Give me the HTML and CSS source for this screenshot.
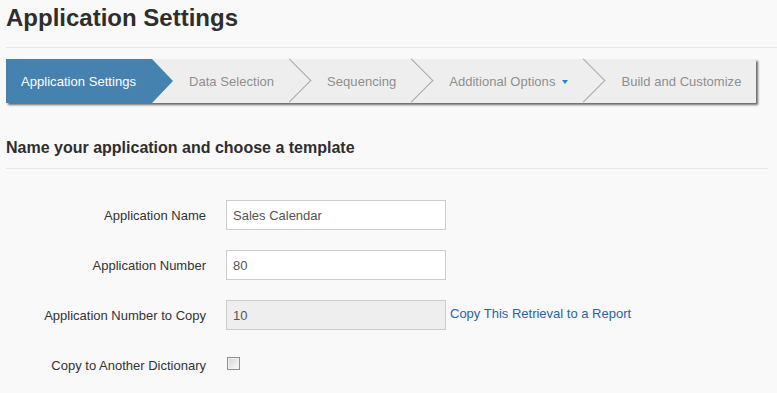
FILE: index.html
```html
<!DOCTYPE html>
<html lang="en">
<head>
  <meta charset="UTF-8">
  <title>Application Settings</title>
  <link rel="stylesheet" href="styles.css">
</head>
<body>
  <main class="page">
    <h1 class="page-title">Application Settings</h1>

    <ol class="wizard">
      <li class="step active">Application Settings</li>
      <li class="step">Data Selection</li>
      <li class="step">Sequencing</li>
      <li class="step">Additional Options<span class="caret"></span></li>
      <li class="step">Build and Customize</li>
    </ol>

    <h2 class="section-title">Name your application and choose a template</h2>

    <form class="form">
      <div class="row">
        <label class="label" for="app-name">Application Name</label>
        <input class="field" id="app-name" type="text" value="Sales Calendar">
      </div>
      <div class="row">
        <label class="label" for="app-number">Application Number</label>
        <input class="field" id="app-number" type="text" value="80">
      </div>
      <div class="row">
        <label class="label" for="app-copy">Application Number to Copy</label>
        <input class="field" id="app-copy" type="text" value="10" disabled>
        <a class="link" href="#">Copy This Retrieval to a Report</a>
      </div>
      <div class="row">
        <label class="label" for="app-dict">Copy to Another Dictionary</label>
        <input class="check" id="app-dict" type="checkbox">
      </div>
    </form>
  </main>
</body>
</html>
```

FILE: styles.css
```css
*, *::before, *::after {
  box-sizing: border-box;
}

body {
  margin: 0;
  background: #f9f9f9;
  color: #333;
  font-family: "Liberation Sans", Arial, sans-serif;
}

.page {
  padding: 3px 0 0 6px;
}

.page-title {
  margin: 0;
  font-size: 24px;
  line-height: 30px;
  font-weight: bold;
  color: #2e2e2e;
  padding-bottom: 14px;
  border-bottom: 1px solid #e6e6e6;
}

.wizard {
  display: flex;
  list-style: none;
  margin: 11px 21px 0 0;
  padding: 0;
  height: 44px;
  background: #eee;
  box-shadow: 2px 2px 2px #6a6a6a;
}

.step {
  position: relative;
  padding: 0 16px;
  margin-right: 21px;
  line-height: 45px;
  font-size: 13px;
  letter-spacing: 0.04px;
  color: #8e8e8e;
  white-space: nowrap;

  /* grey chevron between steps */
  &::after {
    content: '';
    position: absolute;
    top: 6.44px;
    right: -14.56px;
    width: 31.11px;
    height: 31.11px;
    border-top: 1px solid #a8a8a8;
    border-right: 1px solid #a8a8a8;
    transform: rotate(45deg);
  }

  &:last-child {
    margin-right: 0;
    flex: 1;

    &::after {
      display: none;
    }
  }

  &.active {
    padding-left: 15px;
    background: #4682b0;
    color: #fff;

    /* blue arrow tip */
    &::after {
      top: 0;
      left: 100%;
      right: auto;
      width: 0;
      height: 0;
      transform: none;
      border-top: 22px solid transparent;
      border-bottom: 22px solid transparent;
      border-right: none;
      border-left: 21px solid #4682b0;
    }
  }
}

.caret {
  display: inline-block;
  vertical-align: middle;
  margin: -2px 0 0 7px;
  border-top: 4px solid #1a8ad2;
  border-left: 3.5px solid transparent;
  border-right: 3.5px solid transparent;
}

.section-title {
  margin: 35px 9px 0 0;
  padding-bottom: 10px;
  font-size: 16px;
  line-height: 20px;
  font-weight: bold;
  color: #2e2e2e;
  border-bottom: 1px solid #e6e6e6;
}

.form {
  display: flex;
  flex-direction: column;
  gap: 20px;
  margin-top: 31px;
}

.row {
  display: flex;
  align-items: center;
  height: 30px;
}

.label {
  width: 200px;
  margin-right: 20px;
  text-align: right;
  font-size: 13px;
  color: #333;
}

.field {
  width: 220px;
  height: 30px;
  padding: 0 6px;
  border: 1px solid #ccc;
  background: #fff;
  font-family: inherit;
  font-size: 13px;
  color: #555;
  outline: none;

  &:disabled {
    background: #eee;
    color: #555;
  }
}

.link {
  margin: -3px 0 0 4px;
  font-size: 13px;
  color: #2a62b0;
  text-decoration: none;
}

.check {
  appearance: none;
  width: 13px;
  height: 13px;
  margin: -4px 0 0 1px;
  border: 1px solid #8f8f8f;
  background: linear-gradient(135deg, #d4d4d4, #fbfbfb);
  box-shadow: inset 0 0 0 1px #f2f2f2;
}
```
